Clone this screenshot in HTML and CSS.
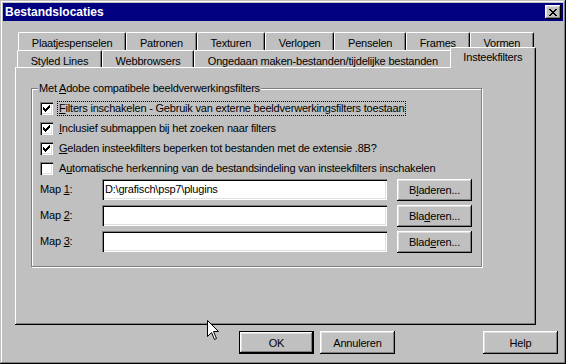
FILE: index.html
```html
<!DOCTYPE html>
<html lang="nl">

<head>
    <meta charset="UTF-8">
    <title>Bestandslocaties</title>
    <link rel="stylesheet" href="styles.css">
</head>

<body>
    <div class="window">
        <div class="titlebar">
            <span class="title">Bestandslocaties</span>
            <button class="close-btn" aria-label="Sluiten">
                <svg width="8" height="7" viewBox="0 0 8 7">
                    <path d="M0 0h2v1h-2z M6 0h2v1h-2z M1 1h2v1h-2z M5 1h2v1h-2z M2 2h4v1h-4z M3 3h2v1h-2z M2 4h4v1h-4z M1 5h2v1h-2z M5 5h2v1h-2z M0 6h2v1h-2z M6 6h2v1h-2z" fill="#000"/>
                </svg>
            </button>
        </div>

        <div class="content">
            <div class="tabs">
                <div class="tab-row back">
                    <div class="tab">Plaatjespenselen</div>
                    <div class="tab">Patronen</div>
                    <div class="tab">Texturen</div>
                    <div class="tab">Verlopen</div>
                    <div class="tab">Penselen</div>
                    <div class="tab">Frames</div>
                    <div class="tab">Vormen</div>
                </div>
                <div class="tab-row front">
                    <div class="tab">Styled Lines</div>
                    <div class="tab">Webbrowsers</div>
                    <div class="tab">Ongedaan maken-bestanden/tijdelijke bestanden</div>
                    <div class="tab active">Insteekfilters</div>
                </div>
            </div>

            <div class="panel">
                <fieldset class="group">
                    <legend>Met <u>A</u>dobe compatibele beeldverwerkingsfilters</legend>

                    <div class="check-list">
                        <div class="check">
                            <span class="box checked"></span>
                            <span class="check-text focus"><u>F</u>ilters inschakelen - Gebruik van externe beeldverwerkingsfilters toestaan</span>
                        </div>
                        <div class="check">
                            <span class="box checked"></span>
                            <span class="check-text"><u>I</u>nclusief submappen bij het zoeken naar filters</span>
                        </div>
                        <div class="check">
                            <span class="box checked"></span>
                            <span class="check-text"><u>G</u>eladen insteekfilters beperken tot bestanden met de extensie .8B?</span>
                        </div>
                        <div class="check">
                            <span class="box"></span>
                            <span class="check-text">A<u>u</u>tomatische herkenning van de bestandsindeling van insteekfilters inschakelen</span>
                        </div>
                    </div>

                    <div class="folders">
                        <div class="folder-row">
                            <span class="folder-label">Map <u>1</u>:</span>
                            <div class="edit">D:\grafisch\psp7\plugins</div>
                            <button class="btn">B<u>l</u>aderen...</button>
                        </div>
                        <div class="folder-row">
                            <span class="folder-label">Map <u>2</u>:</span>
                            <div class="edit"></div>
                            <button class="btn">Bla<u>d</u>eren...</button>
                        </div>
                        <div class="folder-row">
                            <span class="folder-label">Map <u>3</u>:</span>
                            <div class="edit"></div>
                            <button class="btn">Blad<u>e</u>ren...</button>
                        </div>
                    </div>
                </fieldset>
            </div>

            <div class="actions">
                <button class="btn default">OK</button>
                <button class="btn">Annuleren</button>
                <button class="btn help">Help</button>
            </div>
        </div>

        <!-- muisaanwijzer -->
        <svg class="cursor" width="13" height="21" viewBox="0 0 13 21">
            <path d="M0.5 0.5 V16.5 L4.5 12.5 L7.5 19.5 L9.5 18.5 L6.5 11.5 H11.5 Z" fill="#fff" stroke="#000" stroke-width="1"/>
        </svg>
    </div>
</body>

</html>
```

FILE: styles.css
```css
* {
    box-sizing: border-box;
}

body {
    margin: 0;
    background-color: #c0c0c0;
    font-family: 'Liberation Sans', Arial, sans-serif;
    font-size: 11px;
    letter-spacing: -0.2px;
    color: #000;
}

.window {
    position: relative;
    width: 566px;
    height: 364px;
    padding: 3px;
    background-color: #c0c0c0;
    box-shadow: inset -1px -1px #000, inset 1px 1px #c0c0c0, inset -2px -2px #808080, inset 2px 2px #fff;
}

.titlebar {
    display: flex;
    justify-content: space-between;
    align-items: center;
    height: 18px;
    padding: 0 2px;
    background-color: #000080;
    color: #fff;
    font-size: 12px;
    font-weight: bold;
    letter-spacing: 0;
}

.close-btn {
    display: flex;
    justify-content: center;
    align-items: center;
    width: 16px;
    height: 14px;
    padding: 0;
    border: none;
    background-color: #c0c0c0;
    box-shadow: inset -1px -1px #000, inset 1px 1px #fff, inset -2px -2px #808080, inset 2px 2px #dfdfdf;
}

.content {
    padding: 11px 0 0 12px;
}

/* tabbladen */

.tabs {
    width: 521px;
    padding: 0 2px;
}

.tab-row {
    display: flex;
}

.tab-row.back {
    height: 18px;
    padding-left: 1px;
}

.tab-row.front {
    height: 17px;
}

.tab {
    flex: 1 1 auto;
    padding: 4px 6px 0;
    line-height: 12px;
    text-align: center;
    white-space: nowrap;
    background-color: #c0c0c0;
    border-top: 1px solid #fff;
    border-left: 1px solid #fff;
    border-right: 1px solid #000;
    border-radius: 2px 2px 0 0;
    box-shadow: inset -1px 0 #808080;
}

.tab.active {
    z-index: 1;
    margin: -3px -2px -1px;
    padding-top: 3px;
}

.panel {
    width: 521px;
    height: 258px;
    padding: 15px 0 0 16px;
    box-shadow: inset -1px -1px #000, inset 1px 1px #fff, inset -2px -2px #808080;
}

/* groep */

.group {
    width: 451px;
    height: 185px;
    margin: 0;
    padding: 0 9px 0 8px;
    min-width: 0;
    border: 1px solid #808080;
    box-shadow: inset 1px 1px #fff, 1px 1px #fff;
}

.group legend {
    margin-left: -2px;
    padding: 0 1px;
    line-height: 13px;
    background-color: #c0c0c0;
}

.check-list {
    margin-top: 3px;
}

.check {
    display: flex;
    align-items: center;
    height: 20px;
}

.box {
    display: block;
    width: 13px;
    height: 13px;
    margin-right: 4px;
    background-color: #fff;
    box-shadow: inset 1px 1px #808080, inset 2px 2px #000, inset -1px -1px #fff, inset -2px -2px #dfdfdf;
}

.box.checked {
    background-image: url("data:image/svg+xml,%3Csvg xmlns='http://www.w3.org/2000/svg' width='13' height='13' viewBox='0 0 13 13'%3E%3Cpath d='M9 3h1v1h-1z M8 4h2v1h-2z M3 5h1v1h-1z M7 5h3v1h-3z M3 6h2v1h-2z M6 6h3v1h-3z M3 7h5v1h-5z M4 8h3v1h-3z M5 9h1v1h-1z' fill='%23000'/%3E%3C/svg%3E");
}

.check-text {
    padding: 0 1px;
    line-height: 13px;
    border: 1px solid transparent;
}

.check-text.focus {
    border: 1px dotted #000;
}

.folders {
    display: flex;
    flex-direction: column;
    gap: 4px;
    margin-top: 1px;
}

.folder-row {
    display: flex;
    align-items: flex-start;
}

.folder-label {
    width: 62px;
    line-height: 21px;
}

.edit {
    width: 285px;
    height: 21px;
    padding: 0 3px;
    line-height: 21px;
    background-color: #fff;
    box-shadow: inset 1px 1px #808080, inset 2px 2px #000, inset -1px -1px #fff, inset -2px -2px #dfdfdf;
}

/* knoppen */

.btn {
    width: 75px;
    height: 22px;
    padding: 0;
    border: none;
    background-color: #c0c0c0;
    font-family: inherit;
    font-size: 11px;
    letter-spacing: inherit;
    color: #000;
    box-shadow: inset -1px -1px #000, inset 1px 1px #fff, inset -2px -2px #808080, inset 2px 2px #dfdfdf;
}

.folder-row .btn {
    margin-left: 10px;
}

.actions {
    display: flex;
    gap: 6px;
    margin-top: 6px;
    padding: 0 5px 0 224px;
}

.actions .btn {
    height: 23px;
}

.btn.default {
    border: 1px solid #000;
}

.btn.help {
    margin-left: auto;
}

.cursor {
    position: absolute;
    left: 207px;
    top: 320px;
}
```
